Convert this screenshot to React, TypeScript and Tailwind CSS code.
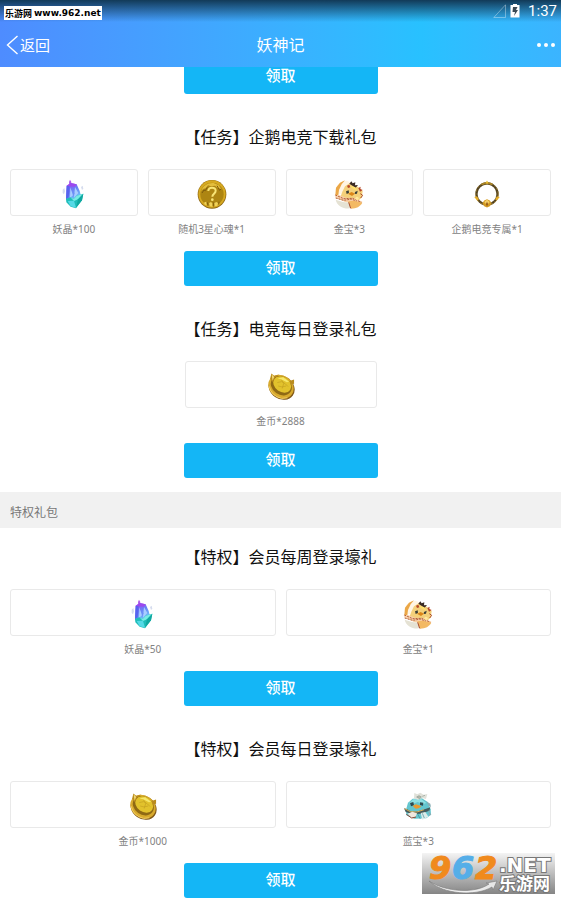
import React from 'react';

type IconName = 'crystal' | 'soul' | 'goldPet' | 'ring' | 'coin' | 'bluePet';

interface Reward {
    icon: IconName;
    label: string;
}

interface GiftPack {
    title: string;
    rewards: Reward[];
}

const taskPacks: GiftPack[] = [
    {
        title: '【任务】企鹅电竞下载礼包',
        rewards: [
            { icon: 'crystal', label: '妖晶*100' },
            { icon: 'soul', label: '随机3星心魂*1' },
            { icon: 'goldPet', label: '金宝*3' },
            { icon: 'ring', label: '企鹅电竞专属*1' },
        ],
    },
    {
        title: '【任务】电竞每日登录礼包',
        rewards: [{ icon: 'coin', label: '金币*2888' }],
    },
];

const vipPacks: GiftPack[] = [
    {
        title: '【特权】会员每周登录壕礼',
        rewards: [
            { icon: 'crystal', label: '妖晶*50' },
            { icon: 'goldPet', label: '金宝*1' },
        ],
    },
    {
        title: '【特权】会员每日登录壕礼',
        rewards: [
            { icon: 'coin', label: '金币*1000' },
            { icon: 'bluePet', label: '蓝宝*3' },
        ],
    },
];

const columns: Record<number, string> = {
    1: 'grid-cols-1 w-48 mx-auto',
    2: 'grid-cols-2 mx-2.5',
    4: 'grid-cols-4 mx-2.5',
};

const Crystal = () => (
    <>
        <defs>
            <linearGradient id="crystal-body" x1="0" y1="0" x2="0.4" y2="1">
                <stop offset="0" stopColor="#a83cf0" />
                <stop offset="0.45" stopColor="#6a7df5" />
                <stop offset="1" stopColor="#6fd6f8" />
            </linearGradient>
        </defs>
        <path d="M11 32l5-5 2 10-3 9-4-4zM66 24l5-4 2 9-4 4z" fill="#d5dcee" />
        <path d="M30 9l3-7 4 7-1 8h-5z" fill="#b05ae8" />
        <path d="M23 20l12-8 18 4 9 20 4 16-16 18-22 1-7-10z" fill="url(#crystal-body)" />
        <path d="M23 20l9 2-3 34-8 5z" fill="#5763ee" />
        <path d="M23 20l12-8 18 4-6 7-15-1z" fill="#9d48ee" />
        <path d="M34 25l8 24-9 8zM48 24l10 18-13 14z" fill="#a9cdff" />
        <path d="M41 27l5 16-4 13z" fill="#6f8cf6" />
        <path d="M21 59l13-4 10 5 9-10 20-6-4 20-18 24-16-5-13-13z" fill="#1fbdb9" />
        <path d="M34 55l10 5 9-10 20-6-16 17-12 5z" fill="#79ece4" />
        <path d="M26 66l19-1 6 21-16-4z" fill="#55d9e6" />
        <path d="M57 61l16-17-4 20-18 22z" fill="#10a8a0" />
    </>
);

const SoulCoin = () => (
    <>
        <circle cx="45" cy="46" r="43" fill="#8e6714" />
        <circle cx="45" cy="45" r="41" fill="#d6a921" />
        <circle cx="45" cy="46" r="35" fill="#ad8512" />
        <path d="M12 38C17 18 35 10 50 12l15 7 8 11-11-4-8-6-12 2-9-3-7 9-8 2z" fill="#e3bd3c" />
        <path d="M60 20l8 14 4-4M15 42l6-9 4 2 6-10" fill="none" stroke="#7d5a0c" strokeWidth="3" />
        <path d="M34 36c0-13 22-13 22-1 0 9-10 9-10 18" fill="none" stroke="#f8e475" strokeWidth="6" />
        <circle cx="46" cy="62" r="4" fill="#f8e475" />
        <path d="M22 70l6-2 1 11-7-3zM36 72l6-3 4 4v10l-8-1zM52 72l6-3 5 3-2 8-8 2z" fill="#f0d25a" />
        <path d="M31 70l2 11M49 70l1 13M66 68l-1 9" stroke="#714e09" strokeWidth="2" />
    </>
);

const GoldPet = () => (
    <>
        <path d="M5 32C8 14 22 5 38 5l14 6-10 14-10 16L8 48z" fill="#fff5e4" />
        <path d="M4 48l2-22L18 11l15-7-10 12-8 17-2 15z" fill="#eba746" />
        <path d="M25 38l8-16 14-9 22 9 17 14-3 20-18 16-29-2-18-13z" fill="#f4d07a" />
        <path d="M46 14l6-7 4 6 8-3-1 9 9-1-7 8-12-7z" fill="#3a2a24" />
        <path d="M39 20l7-3 3 8-7 2zM73 27l7-4-1 7 7 3-8 5z" fill="#b64728" />
        <path d="M48 22l15 2 6 10-11-4z" fill="#ffe26a" />
        <path d="M36 37l8-3 1 8-7 3zM63 39l8-4-2 9-7 1z" fill="#3b4038" />
        <path d="M42 44l11-5 10 5-9 7z" fill="#db8618" />
        <path d="M2 48l15 1 20 7 24 1 24 11-5 7-24-7-22 1L6 57z" fill="#f8cfa8" />
        <path d="M4 48l25 11 27-1 26 12M5 57l24 7 25-4 23 15" fill="none" stroke="#b5613a" strokeWidth="3" strokeDasharray="6 3" />
        <path d="M5 62l22 7 19 2 4 17C28 91 9 80 5 62z" fill="#e5e2d4" />
        <path d="M43 67l16-2 26 6c-7 12-17 17-34 18z" fill="#f3b963" />
        <path d="M44 70l6 18M79 44l7 5-6 8" fill="none" stroke="#ab4a28" strokeWidth="3" />
        <circle cx="69" cy="58" r="5" fill="#ffe99d" />
    </>
);

const Ring = () => (
    <>
        <circle cx="45" cy="45" r="34" fill="none" stroke="#4a3c1e" strokeWidth="7" />
        <circle cx="45" cy="45" r="36" fill="none" stroke="#a8883b" strokeWidth="3" strokeDasharray="8 4" />
        <circle cx="45" cy="45" r="31" fill="none" stroke="#7a6430" strokeWidth="2" strokeDasharray="4 3" />
        <path d="M26 12q19-11 38 0l-4 5q-15-8-30 0z" fill="#a98425" />
        <path d="M41 8l4-6 4 6-4 6z" fill="#e8bb32" />
        <path d="M4 55l9-3 6 10-5 5zM86 55l-9-3-6 10 5 5z" fill="#e6ae28" />
        <path d="M30 75l6-9 9-4 9 4 6 9-6 9-9 4-9-4z" fill="#d29a22" />
        <path d="M36 71l9-8 9 8-5 5h-8z" fill="#f3ce67" />
        <path d="M45 70l3 7-3 8-3-8z" fill="#8a4c14" />
    </>
);

const GoldCoin = () => (
    <>
        <ellipse cx="47" cy="50" rx="44" ry="37" transform="rotate(35 47 50)" fill="#805717" />
        <ellipse cx="45" cy="47" rx="43" ry="36" transform="rotate(35 45 47)" fill="#d8aa2d" />
        <ellipse cx="46" cy="44" rx="36" ry="29" transform="rotate(35 46 44)" fill="#8f6914" />
        <ellipse cx="49" cy="40" rx="31" ry="24" transform="rotate(35 49 40)" fill="#e2c22c" />
        <path d="M10 22l4-17 10 8 15-5-14 11-6 14-6-9zM72 29l15-5v15l-6-3-4 8z" fill="#b98b1e" />
        <path d="M15 7l8 9-5 11z" fill="#f3dc76" />
        <path d="M34 20l18-3 19 14-7 2-14-7z" fill="#f6e76c" />
        <path d="M33 34l14-3 12 7 9 9M36 45l12 3 14-3M45 24l9 12-5 17" fill="none" stroke="#c29e1e" strokeWidth="2" />
        <path d="M7 46q7 31 40 39l19-2" fill="none" stroke="#f3d067" strokeWidth="3" />
    </>
);

const BluePet = () => (
    <>
        <path d="M9 56l6-21 14-12 28-1 17 11 9 22 1 16-14 11-36 1L10 73z" fill="#63c5ce" />
        <path d="M18 37l13-12 24-1 15 12-9 3-17-6-13 5z" fill="#8fe0e3" />
        <path d="M34 6l9 4 9-5 10 6 11-2-4 15-12-3-12 5-12-4z" fill="#e0e1d9" />
        <path d="M41 18l7-4 7 4-5 5zM58 16l8-3" fill="#b8b9ab" stroke="#8c9b93" strokeWidth="2" />
        <path d="M21 36l10-3 2 10-9 3zM51 34l10 1-1 9-9-2z" fill="#2e4a50" />
        <path d="M29 45l9-5 10 3 7 3-8 6-9 1z" fill="#e9992f" />
        <path d="M3 52l10 3 12 7 20-1 22-7 15-5-3 10-24 9-29 1-18-6z" fill="#465b5d" />
        <path d="M5 53l17 9 20 1 21-7" fill="none" stroke="#d8ad52" strokeWidth="3" />
        <path d="M14 68l14-6 14 5-4 10-12 4z" fill="#f1e7de" />
        <path d="M10 70l16 11 13-3" fill="none" stroke="#8a4937" strokeWidth="3" />
        <path d="M53 66l14-3 9 14-18 9z" fill="#dcebe9" />
        <path d="M70 31l12 7 2 10-7-3zM76 57l9 14-7 3z" fill="#8aaeb5" />
        <path d="M44 69l8 15M58 67l6 14" stroke="#3e8b96" strokeWidth="2" />
    </>
);

const icons: Record<IconName, React.FC> = {
    crystal: Crystal,
    soul: SoulCoin,
    goldPet: GoldPet,
    ring: Ring,
    coin: GoldCoin,
    bluePet: BluePet,
};

const sizes: Record<IconName, string> = {
    crystal: 'size-[30px]',
    soul: 'size-[30px]',
    goldPet: 'size-[30px]',
    ring: 'size-7',
    coin: 'size-7',
    bluePet: 'size-[30px]',
};

const ClaimButton = () => (
    <button
        type="button"
        className="mx-auto flex h-[35px] w-[194px] items-center justify-center rounded-[3px] bg-[#14b6f6] pb-1 text-[15px] leading-none font-medium text-white"
    >
        领取
    </button>
);

const RewardCard: React.FC<{ reward: Reward }> = ({ reward }) => {
    const Icon = icons[reward.icon];
    return (
        <li className="min-w-0">
            <div className="flex h-[47px] items-center justify-center rounded-[3px] border border-[#e9e9e9] pt-0.5">
                <svg viewBox="0 0 90 90" className={sizes[reward.icon]} aria-hidden="true">
                    <Icon />
                </svg>
            </div>
            <p className="mt-1 text-center font-['Noto_Sans','Noto_Sans_CJK_SC',sans-serif] text-[10px] leading-[18px] whitespace-nowrap text-[#828282]">
                {reward.label}
            </p>
        </li>
    );
};

const PackSection: React.FC<{ pack: GiftPack }> = ({ pack }) => (
    <section className="pt-4 pb-3.5">
        <h2 className="text-center text-base leading-6 text-[#111]">{pack.title}</h2>
        <ul className={`mt-[21px] mb-[13px] grid gap-2.5 ${columns[pack.rewards.length]}`}>
            {pack.rewards.map((reward) => (
                <RewardCard key={reward.label} reward={reward} />
            ))}
        </ul>
        <ClaimButton />
    </section>
);

const StatusBar = () => (
    <div className="flex h-[22px] items-center justify-between bg-linear-to-b from-[#123a58] to-transparent pr-1 pl-1">
        <span className="mt-1 flex h-3.5 items-center gap-0.5 bg-white px-px text-black">
            <span className="text-[9px] leading-none font-bold">乐游网</span>
            <span className="font-['DejaVu_Sans',sans-serif] text-[9px] leading-none font-bold">www.962.net</span>
        </span>
        <span className="flex items-center gap-1 text-white">
            <svg viewBox="0 0 13 14" className="h-3.5 w-[13px]" aria-hidden="true">
                <path d="M12.5 .8v12.7H.8z" fill="none" stroke="#fff" strokeOpacity="0.35" />
            </svg>
            <svg viewBox="0 0 10 14" className="mr-1 h-3.5 w-2.5" aria-hidden="true">
                <path d="M3 0h4v1h2.5v12.5H.5V1H3z" fill="#fff" />
                <path d="M3 3h4.500L6 6h2L4 12l1-4H2.500z" fill="#3b4a55" />
            </svg>
            <span className="font-['Roboto',sans-serif] text-[15px] leading-none">1:37</span>
        </span>
    </div>
);

const SiteMark = () => (
    <svg
        viewBox="0 0 133 41"
        className="absolute right-1.5 bottom-1.5 h-[41px] w-[133px]"
        role="img"
        aria-label="962.NET 乐游网"
    >
        <defs>
            <linearGradient id="mark-bg" x1="0" y1="0" x2="0" y2="1">
                <stop offset="0" stopColor="#f4f4f4" />
                <stop offset="1" stopColor="#858585" />
            </linearGradient>
            <linearGradient id="mark-swoosh" x1="0" y1="0" x2="1" y2="0">
                <stop offset="0" stopColor="#ffffff" />
                <stop offset="1" stopColor="#e4e4e4" />
            </linearGradient>
        </defs>
        <rect width="133" height="41" fill="url(#mark-bg)" />
        <g
            fontFamily="'DejaVu Sans', sans-serif"
            fontWeight="bold"
            fontStyle="italic"
            fontSize="32"
            strokeWidth="1"
        >
            <text x="7" y="26" fill="#f08a1d" stroke="#f08a1d">9</text>
            <text x="30" y="26" fill="#55aee8" stroke="#55aee8">6</text>
            <text x="53" y="26" fill="#f08a1d" stroke="#f08a1d">2</text>
        </g>
        <path d="M7 28c16 11 46 13 60 3l-3-1 11-2-4 9-1-3C53 44 21 41 7 28z" fill="url(#mark-swoosh)" stroke="#777" strokeWidth="0.6" />
        <g fill="#fff" stroke="#777" strokeWidth="2" paintOrder="stroke" fontWeight="bold">
            <text x="77" y="19" fontFamily="'DejaVu Sans', sans-serif" fontSize="20">.NET</text>
            <text x="77" y="37" fontFamily="'Noto Sans CJK SC', sans-serif" fontSize="17">乐游网</text>
        </g>
    </svg>
);

const App: React.FC = () => {
    return (
        <div className="relative flex h-screen flex-col overflow-hidden bg-white font-['Noto_Sans_CJK_SC',sans-serif]">
            <header className="shrink-0 bg-linear-to-r from-[#4e8cff] via-[#28c1ff] via-75% to-[#3bb4ff]">
                <StatusBar />
                <nav className="grid h-[45px] grid-cols-3 items-center pr-1.5 pl-1.5 text-white">
                    <a href="#back" className="flex items-center gap-0.5 text-[15px] leading-none">
                        <svg viewBox="0 0 12 20" className="h-5 w-3" aria-hidden="true">
                            <path d="M11.5 1L1.500 10l10 9" fill="none" stroke="#fff" strokeWidth="1.4" />
                        </svg>
                        返回
                    </a>
                    <h1 className="pb-0.5 text-center text-base leading-none">妖神记</h1>
                    <button type="button" aria-label="更多" className="flex justify-end gap-[3px]">
                        <span className="size-1 rounded-full bg-white" />
                        <span className="size-1 rounded-full bg-white" />
                        <span className="size-1 rounded-full bg-white" />
                    </button>
                </nav>
            </header>

            <main className="min-h-0 flex-1 overflow-hidden">
                {/* Pack already scrolled under the header */}
                <div className="-mt-2 pb-3.5">
                    <ClaimButton />
                </div>
                {taskPacks.map((pack) => (
                    <PackSection key={pack.title} pack={pack} />
                ))}
                <h2 className="flex h-9 items-center bg-[#f1f1f1] px-2.5 pt-1 text-xs text-[#777]">特权礼包</h2>
                {vipPacks.map((pack) => (
                    <PackSection key={pack.title} pack={pack} />
                ))}
            </main>

            <SiteMark />
        </div>
    );
};

export default App;
